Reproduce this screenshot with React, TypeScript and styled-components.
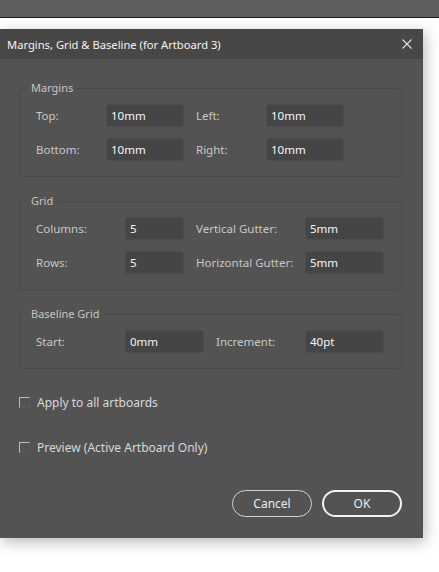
import React from "react";
import styled, { createGlobalStyle } from "styled-components";

const Global = createGlobalStyle`
  html, body { margin: 0; padding: 0; background: #ffffff; }
  body { font-family: "Noto Sans", "Open Sans", sans-serif; }
  * { box-sizing: border-box; }
`;

const Page = styled.div`
  width: 439px;
  height: 572px;
  background: #ffffff;
  display: flex;
  flex-direction: column;
  overflow: hidden;
`;

const TopBar = styled.div`
  height: 18px;
  flex: none;
  background: #5e5e5e;
  border-bottom: 1px solid #1c1c1c;
`;

const Stage = styled.div`
  padding-top: 11px;
`;

const Dialog = styled.div`
  width: 423px;
  height: 509px;
  background: #535353;
  box-shadow: 2px 4px 14px rgba(0, 0, 0, 0.28);
  display: flex;
  flex-direction: column;
  font-family: "Noto Sans", "Open Sans", sans-serif;
  font-size: 11.5px;
`;

const TitleBar = styled.div`
  height: 30px;
  flex: none;
  background: #484746;
  display: flex;
  align-items: center;
  justify-content: space-between;
  padding: 0 11px 0 7px;
  color: #f2f2f2;
  font-size: 11.2px;
`;

const CloseButton = styled.button`
  width: 10px;
  height: 10px;
  padding: 0;
  border: none;
  background: transparent;
  display: flex;
  cursor: pointer;
`;

const Body = styled.div`
  flex: 1;
  display: flex;
  flex-direction: column;
  padding: 21px 21px 21px 19px;
`;

const Group = styled.fieldset`
  margin: 0 0 16px 0;
  padding: 8px 15px 15px 16px;
  border: 1px solid #4a4a4a;
  border-radius: 3px;
  min-width: 0;
`;

const Legend = styled.legend`
  margin-left: -9px;
  padding: 0 4px;
  line-height: 16px;
  color: #c4c4c4;
  font-size: 11px;
`;

const FieldGrid = styled.div<{ $cols: string }>`
  display: grid;
  grid-template-columns: ${(p) => p.$cols};
  column-gap: 0;
  row-gap: 11px;
  align-items: center;
`;

const Label = styled.span`
  color: #c8c8c8;
  font-size: 11.5px;
  white-space: nowrap;
`;

const Input = styled.input`
  height: 23px;
  width: 100%;
  background: #454545;
  border: 1px solid #4c4c4c;
  border-radius: 3px;
  color: #f6f6f6;
  font-family: inherit;
  font-size: 11.5px;
  padding: 0 0 0 4px;
  outline: none;
`;

const Gap = styled.span``;

const CheckRow = styled.label<{ $top: number }>`
  display: flex;
  align-items: center;
  gap: 7px;
  height: 16px;
  margin-top: ${(p) => p.$top}px;
  color: #d8d8d8;
  font-size: 12px;
  cursor: pointer;
`;

const CheckBox = styled.span`
  width: 11px;
  height: 11px;
  flex: none;
  border-top: 1px solid #bdbdbd;
  border-left: 1px solid #bdbdbd;
  border-right: 1px solid #5a5a5a;
  border-bottom: 1px solid #5a5a5a;
`;

const Buttons = styled.div`
  margin-top: auto;
  display: flex;
  justify-content: flex-end;
  gap: 10px;
`;

const PillButton = styled.button<{ $primary?: boolean }>`
  width: 80px;
  height: 27px;
  border-radius: 14px;
  background: transparent;
  border: ${(p) => (p.$primary ? "2px solid #f2f2f2" : "1px solid #d2d2d2")};
  color: #ececec;
  font-family: inherit;
  font-size: 12px;
  cursor: pointer;
  padding: 0;
`;

type Field = { label: string; value: string };

const FieldSet: React.FC<{ title: string; cols: string; rows: Field[][] }> = ({
  title,
  cols,
  rows,
}) => (
  <Group>
    <Legend>{title}</Legend>
    <FieldGrid $cols={cols}>
      {rows.map((row, i) => (
        <React.Fragment key={i}>
          <Label>{row[0].label}</Label>
          <Input defaultValue={row[0].value} />
          <Gap />
          <Label>{row[1].label}</Label>
          <Input defaultValue={row[1].value} />
        </React.Fragment>
      ))}
    </FieldGrid>
  </Group>
);

export default function App() {
  return (
    <>
      <Global />
      <Page>
        <TopBar />
        <Stage>
          <Dialog>
            <TitleBar>
              <span>Margins, Grid &amp; Baseline (for Artboard 3)</span>
              <CloseButton aria-label="Close">
                <svg width="10" height="10" viewBox="0 0 10 10">
                  <path d="M0.5 0.5 L9.5 9.5 M9.5 0.5 L0.5 9.5" stroke="#e2e2e2" strokeWidth="1.1" />
                </svg>
              </CloseButton>
            </TitleBar>
            <Body>
              <FieldSet
                title="Margins"
                cols="70px 78px 12px 70px 78px"
                rows={[
                  [
                    { label: "Top:", value: "10mm" },
                    { label: "Left:", value: "10mm" },
                  ],
                  [
                    { label: "Bottom:", value: "10mm" },
                    { label: "Right:", value: "10mm" },
                  ],
                ]}
              />
              <FieldSet
                title="Grid"
                cols="89px 59px 12px 109px 79px"
                rows={[
                  [
                    { label: "Columns:", value: "5" },
                    { label: "Vertical Gutter:", value: "5mm" },
                  ],
                  [
                    { label: "Rows:", value: "5" },
                    { label: "Horizontal Gutter:", value: "5mm" },
                  ],
                ]}
              />
              <FieldSet
                title="Baseline Grid"
                cols="89px 79px 12px 89px 79px"
                rows={[
                  [
                    { label: "Start:", value: "0mm" },
                    { label: "Increment:", value: "40pt" },
                  ],
                ]}
              />
              <CheckRow $top={9}>
                <CheckBox />
                <span>Apply to all artboards</span>
              </CheckRow>
              <CheckRow $top={29}>
                <CheckBox />
                <span>Preview (Active Artboard Only)</span>
              </CheckRow>
              <Buttons>
                <PillButton>Cancel</PillButton>
                <PillButton $primary>OK</PillButton>
              </Buttons>
            </Body>
          </Dialog>
        </Stage>
      </Page>
    </>
  );
}
